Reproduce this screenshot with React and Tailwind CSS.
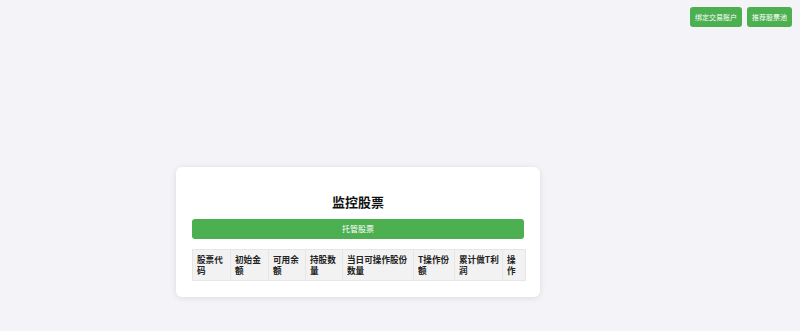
const columns = [
  { label: "股票代码", width: "w-[38px]" },
  { label: "初始金额", width: "w-[38px]" },
  { label: "可用余额", width: "w-[37px]" },
  { label: "持股数量", width: "w-[37px]" },
  { label: "当日可操作股份数量", width: "w-[71px]" },
  { label: "T操作份额", width: "w-[41px]" },
  { label: "累计做T利润", width: "w-[48px]" },
  { label: "操作", width: "w-[23px]" },
];

function TopButton({ children }) {
  return (
    <button className="h-[20px] rounded-[3px] bg-[#4caf50] px-[5px] text-[7px] leading-none text-white">
      {children}
    </button>
  );
}

export default function App() {
  return (
    <div
      className="min-h-[331px] bg-[#f4f4f8] text-[#222]"
      style={{ fontFamily: '"Noto Sans CJK SC", "Noto Sans", sans-serif' }}
    >
      <header className="flex justify-end gap-[5px] pr-[8px] pt-[7px]">
        <TopButton>绑定交易账户</TopButton>
        <TopButton>推荐股票池</TopButton>
      </header>

      <main className="pl-[176px] pt-[140px]">
        <section className="w-[364px] rounded-[6px] bg-white px-[16px] pb-[16px] pt-[26px] shadow-[0_1px_6px_rgba(0,0,0,0.1)]">
          <h2 className="text-center text-[13px] leading-[18px] font-bold text-[#111]">监控股票</h2>
          <button className="mt-[8px] block h-[20px] w-full rounded-[3px] bg-[#4caf50] text-[8px] leading-none text-white">
            托管股票
          </button>
          <table className="mt-[10px] w-[333px] table-fixed border-collapse">
            <thead>
              <tr>
                {columns.map((col) => (
                  <th
                    key={col.label}
                    className={`${col.width} border border-[#e6e6e6] bg-[#f2f2f2] pl-[4px] pr-[2px] py-[4px] text-left align-top text-[8.6px] leading-[11px] font-bold text-[#222]`}
                  >
                    {col.label}
                  </th>
                ))}
              </tr>
            </thead>
            <tbody />
          </table>
        </section>
      </main>
    </div>
  );
}
